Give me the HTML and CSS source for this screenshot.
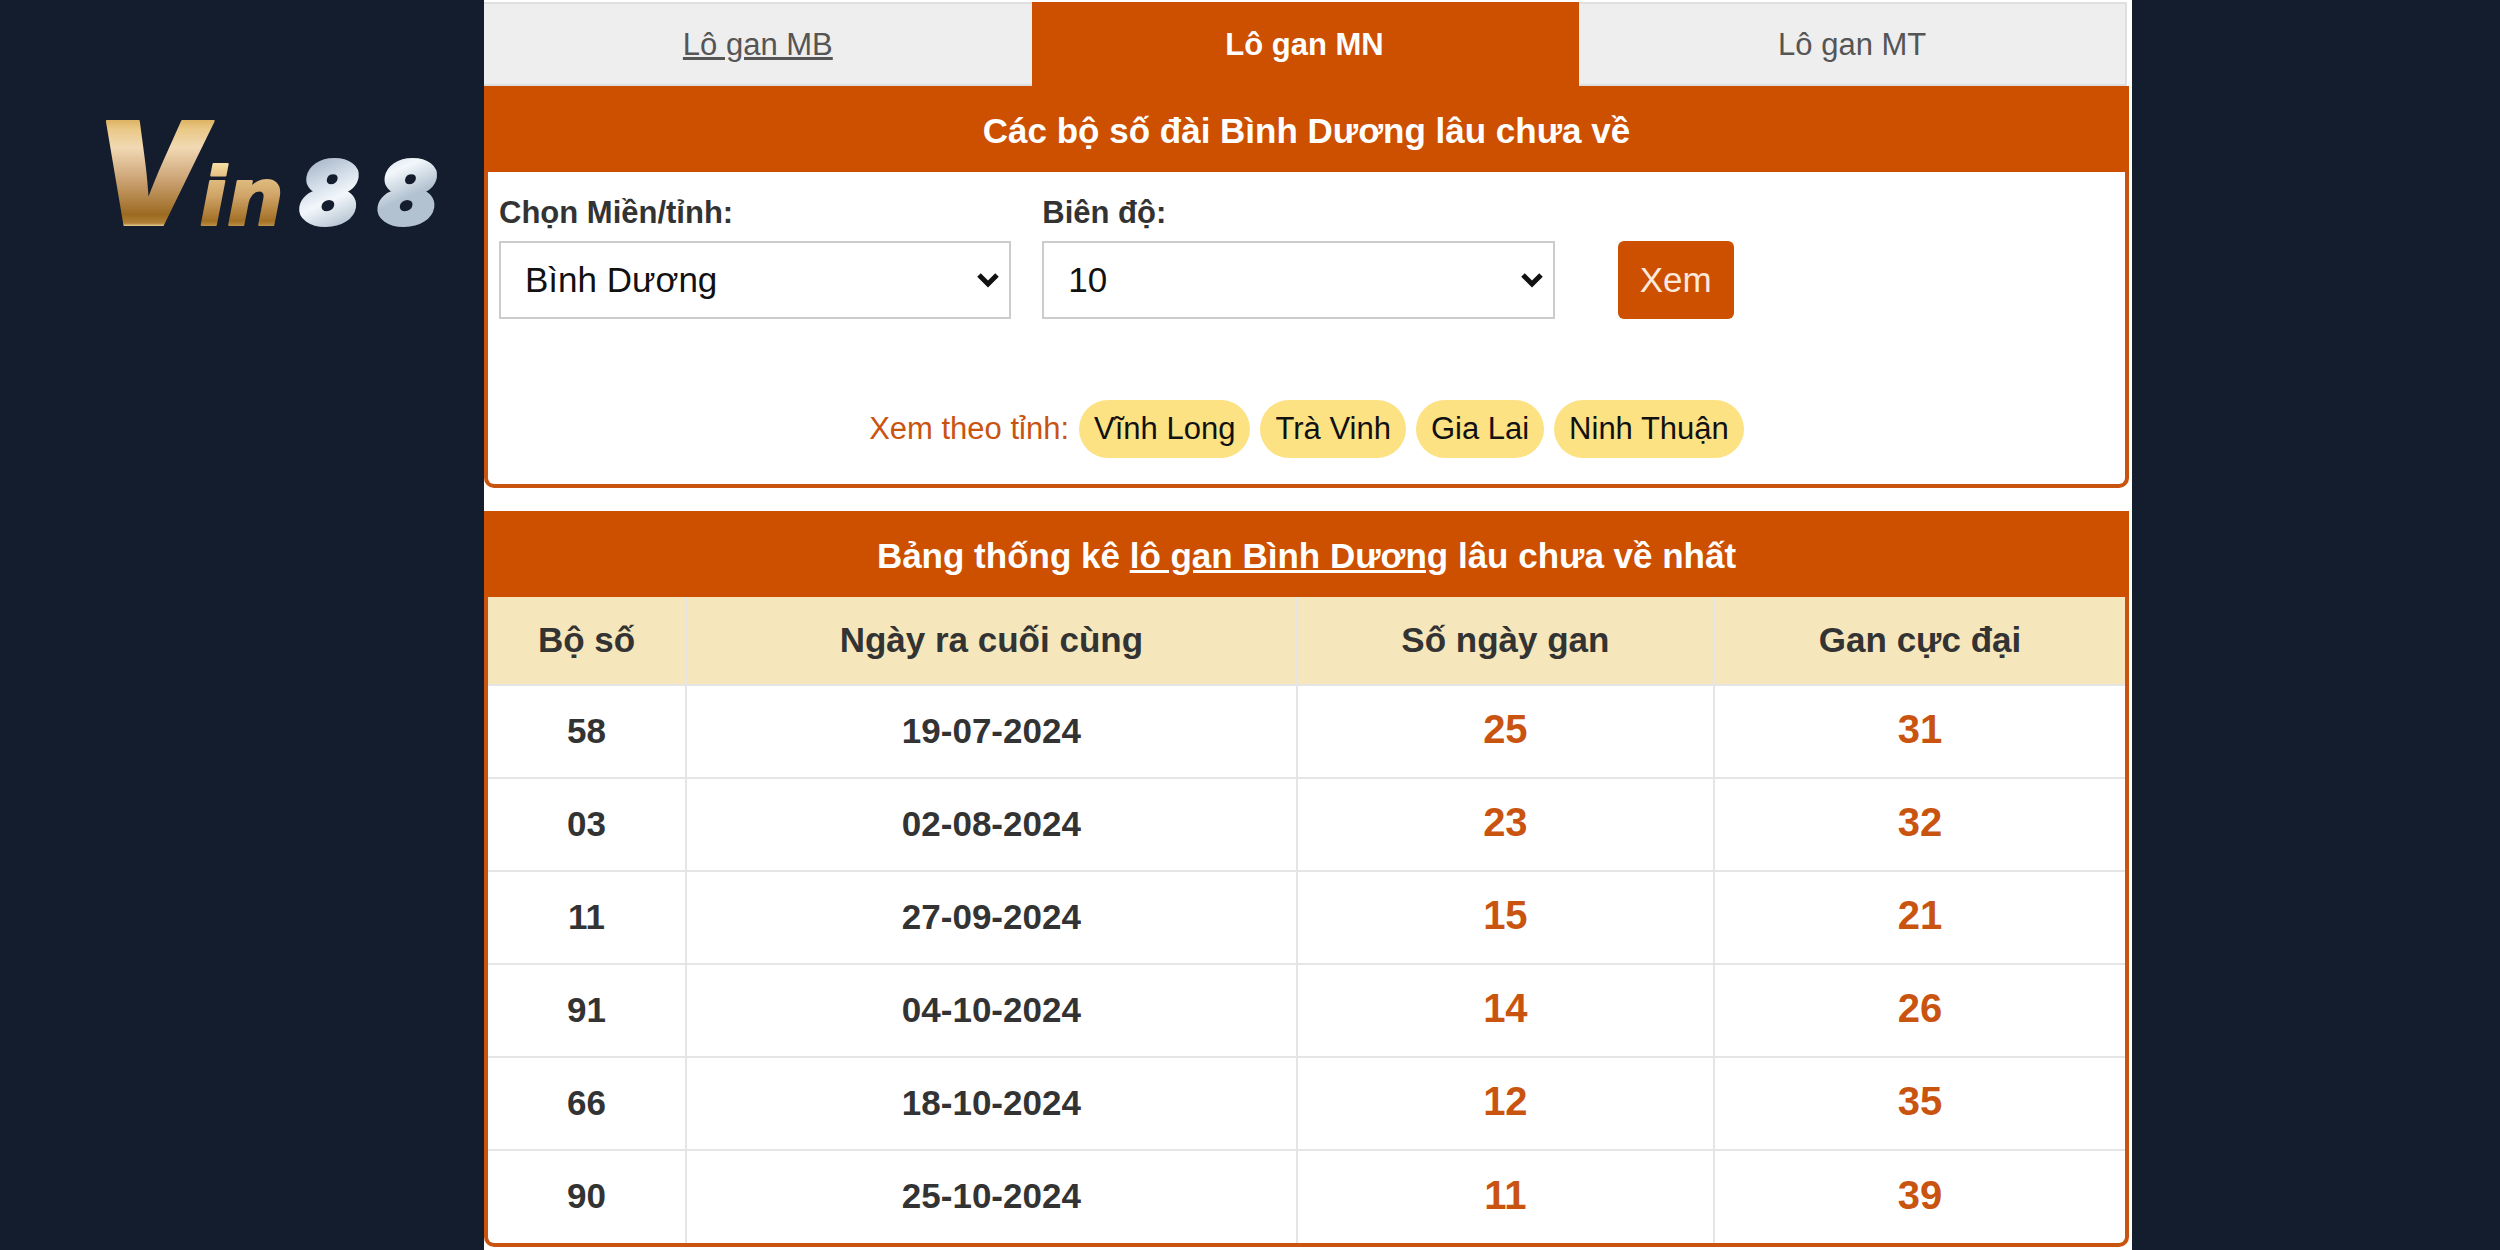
FILE: index.html
```html
<!DOCTYPE html>
<html lang="vi">
<head>
<meta charset="utf-8">
<meta name="viewport" content="width=device-width, initial-scale=1">
<title>Lô gan Bình Dương</title>
<link rel="stylesheet" href="styles.css">
</head>
<body>
<header class="side">
  <svg class="logo" viewBox="0 0 358 106" role="img" aria-label="Vin88">
    <defs>
      <linearGradient id="gold-v" gradientUnits="userSpaceOnUse" x1="0" y1="-2" x2="0" y2="104">
        <stop offset="0" stop-color="#dfb566"/>
        <stop offset=".08" stop-color="#e9c987"/>
        <stop offset=".25" stop-color="#f1d9b3"/>
        <stop offset=".5" stop-color="#d3ac80"/>
        <stop offset=".88" stop-color="#9c6a22"/>
        <stop offset=".96" stop-color="#b08036"/>
        <stop offset="1" stop-color="#fbeec2"/>
      </linearGradient>
      <linearGradient id="gold-in" gradientUnits="userSpaceOnUse" x1="0" y1="41" x2="0" y2="104">
        <stop offset="0" stop-color="#f5dca0"/>
        <stop offset=".2" stop-color="#e2bf82"/>
        <stop offset=".5" stop-color="#d0a468"/>
        <stop offset=".9" stop-color="#a37026"/>
        <stop offset=".97" stop-color="#b58a40"/>
        <stop offset="1" stop-color="#fbeec2"/>
      </linearGradient>
      <linearGradient id="silver" gradientUnits="userSpaceOnUse" x1="210" y1="38" x2="240" y2="104">
        <stop offset="0" stop-color="#a9b7c9"/>
        <stop offset=".35" stop-color="#d5dfea"/>
        <stop offset=".6" stop-color="#f2f7fb"/>
        <stop offset="1" stop-color="#b3c2d0"/>
      </linearGradient>
    </defs>
    <text class="logo-v" x="-8" y="102">V</text>
    <text class="logo-in" x="98" y="102">in</text>
    <text class="logo-num" x="198" y="101">8</text>
    <text class="logo-num" x="276" y="101">8</text>
  </svg>
</header>

<main class="content">
  <nav class="tabs">
    <a class="tab tab-hover" href="#mb">Lô gan MB</a>
    <a class="tab tab-active" href="#mn">Lô gan MN</a>
    <a class="tab" href="#mt">Lô gan MT</a>
  </nav>

  <section class="box">
    <h2 class="box-title">Các bộ số đài Bình Dương lâu chưa về</h2>
    <form class="filter">
      <div class="field">
        <label class="field-label" for="province">Chọn Miền/tỉnh:</label>
        <div class="select-wrap">
          <select class="select" id="province"><option>Bình Dương</option></select>
          <svg class="chevron" viewBox="0 0 22 16" aria-hidden="true"><path d="M2 3l9 9 9-9"/></svg>
        </div>
      </div>
      <div class="field">
        <label class="field-label" for="range">Biên độ:</label>
        <div class="select-wrap">
          <select class="select" id="range"><option>10</option></select>
          <svg class="chevron" viewBox="0 0 22 16" aria-hidden="true"><path d="M2 3l9 9 9-9"/></svg>
        </div>
      </div>
      <button class="submit" type="button">Xem</button>
    </form>
    <div class="links">
      <span class="links-label">Xem theo tỉnh:</span>
      <a class="pill" href="#vinh-long">Vĩnh Long</a>
      <a class="pill" href="#tra-vinh">Trà Vinh</a>
      <a class="pill" href="#gia-lai">Gia Lai</a>
      <a class="pill" href="#ninh-thuan">Ninh Thuận</a>
    </div>
  </section>

  <section class="box">
    <h2 class="box-title">Bảng thống kê <a class="title-link" href="#binh-duong">lô gan Bình Dương</a> lâu chưa về nhất</h2>
    <table class="stats">
      <colgroup><col class="col-number"><col class="col-date"><col class="col-days"><col class="col-max"></colgroup>
      <thead>
        <tr><th>Bộ số</th><th>Ngày ra cuối cùng</th><th>Số ngày gan</th><th>Gan cực đại</th></tr>
      </thead>
      <tbody>
        <tr><td>58</td><td>19-07-2024</td><td class="hot">25</td><td class="hot">31</td></tr>
        <tr><td>03</td><td>02-08-2024</td><td class="hot">23</td><td class="hot">32</td></tr>
        <tr><td>11</td><td>27-09-2024</td><td class="hot">15</td><td class="hot">21</td></tr>
        <tr><td>91</td><td>04-10-2024</td><td class="hot">14</td><td class="hot">26</td></tr>
        <tr><td>66</td><td>18-10-2024</td><td class="hot">12</td><td class="hot">35</td></tr>
        <tr><td>90</td><td>25-10-2024</td><td class="hot">11</td><td class="hot">39</td></tr>
      </tbody>
    </table>
  </section>
</main>
</body>
</html>
```
FILE: styles.css
```css
* {
  box-sizing: border-box;
}

body {
  margin: 0;
  min-height: 100vh;
  display: grid;
  grid-template-columns: 484fr 1648fr 368fr;
  background: #141d2d;
  color: #333;
  font-family: "Liberation Sans", Arial, sans-serif;
  font-size: 35px;
}

.side {
  padding: 123px 24px 0 101px;
}

.logo {
  display: block;
  width: 100%;
  overflow: visible;
}

.logo text {
  font-family: Inter, sans-serif;
  font-weight: 900;
  font-style: italic;
  stroke-linejoin: round;
}

.logo-v {
  font-size: 142px;
  fill: url(#gold-v);
  stroke: url(#gold-v);
  stroke-width: 2px;
}

.logo .logo-in {
  font-family: "DejaVu Sans", sans-serif;
  font-size: 80px;
  fill: url(#gold-in);
  stroke: url(#gold-in);
  stroke-width: 2px;
}

.logo-num {
  font-size: 86px;
  fill: url(#silver);
  stroke: url(#silver);
  stroke-width: 4px;
}

.content {
  padding: 2px 3px 3px 0;
  background: #fff;
}

.tabs {
  display: grid;
  grid-template-columns: repeat(3, 1fr);
  padding-right: 2px;
}

.tab {
  height: 84px;
  border: 2px solid #dfdfdf;
  border-left-width: 0;
  background: #eee;
  color: #555;
  font-size: 31px;
  line-height: 82px;
  text-align: center;
  text-decoration: none;
}

.tab-hover {
  border-right: 0;
  text-decoration: underline;
}

.tab-active {
  border-color: #cd4f00;
  background: #cd4f00;
  color: #fff;
  font-weight: bold;
}

.box {
  border: 4px solid #c9540f;
  border-top: 0;
  border-radius: 0 0 10px 10px;
}

.box + .box {
  margin-top: 23px;
}

.box-title {
  margin: 0 -4px;
  padding-top: 4px;
  background: #cd4f00;
  color: #fff;
  font-size: 35px;
  line-height: 82px;
  text-align: center;
}

.title-link {
  color: inherit;
}

.filter {
  display: grid;
  grid-template-columns: 32fr 32fr 33fr;
  gap: 31px;
  align-items: end;
  padding: 21px 11px 0;
}

.field-label {
  display: block;
  margin-bottom: 8px;
  font-size: 31px;
  font-weight: bold;
  line-height: 40px;
}

.select-wrap {
  display: grid;
  align-items: center;
}

.select {
  grid-area: 1 / 1;
  width: 100%;
  height: 78px;
  padding: 0 48px 2px 24px;
  border: 2px solid #ccc;
  border-radius: 0;
  appearance: none;
  background: #fff;
  color: #111;
  font: 35px "Liberation Sans", Arial, sans-serif;
}

.chevron {
  grid-area: 1 / 1;
  justify-self: end;
  width: 22px;
  margin-right: 12px;
  fill: none;
  stroke: #111;
  stroke-width: 5px;
  pointer-events: none;
}

.submit {
  justify-self: start;
  height: 78px;
  margin-left: 32px;
  padding: 0 22px;
  border: 0;
  border-radius: 6px;
  background: #cd4f00;
  color: #fbe9dc;
  font: 35px "Liberation Sans", Arial, sans-serif;
}

.links {
  display: flex;
  justify-content: center;
  gap: 10px;
  padding: 81px 0 26px;
  font-size: 31px;
  line-height: 58px;
}

.links-label {
  color: #c9540f;
}

.pill {
  padding: 0 15px;
  border-radius: 29px;
  background: #fce283;
  color: #111;
  text-decoration: none;
}

.stats {
  width: 100%;
  table-layout: fixed;
  border-collapse: collapse;
  font-weight: bold;
  text-align: center;
}

.col-number { width: 12.1%; }
.col-date { width: 37.3%; }
.col-days { width: 25.5%; }
.col-max { width: 25.1%; }

.stats th,
.stats td {
  height: 93px;
  padding: 0 0 2px;
  border: 2px solid #e5e5e5;
}

.stats th {
  height: 88px;
  background: #f5e7bb;
}

.stats tr > :first-child {
  border-left: 0;
}

.stats tr > :last-child {
  border-right: 0;
}

.stats tr:last-child td {
  border-bottom: 0;
}

.stats thead th {
  border-top: 0;
}

.stats .hot {
  padding-bottom: 4px;
  color: #c9540f;
  font-size: 40px;
}
```
